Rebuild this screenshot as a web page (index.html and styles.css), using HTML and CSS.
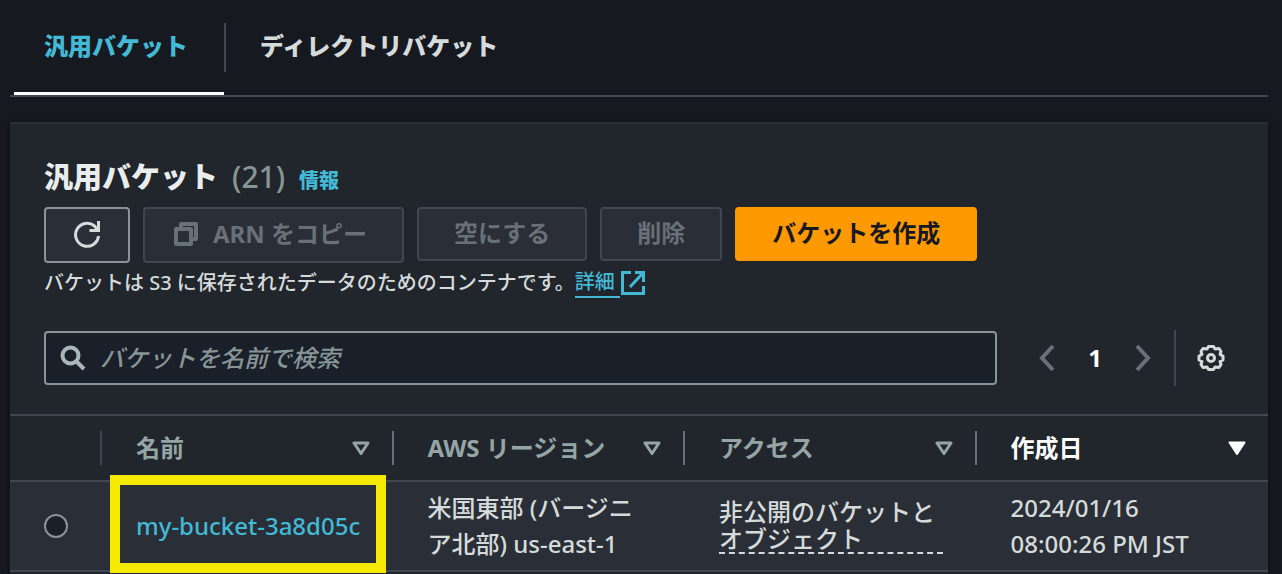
FILE: index.html
```html
<!DOCTYPE html>
<html lang="ja">
<head>
    <meta charset="UTF-8">
    <meta name="viewport" content="width=device-width, initial-scale=1.0">
    <title>S3 バケット</title>
    <link rel="stylesheet" href="styles.css">
</head>
<body>
    <div class="tabs" role="tablist">
        <button class="tab active" role="tab" aria-selected="true">汎用バケット</button>
        <button class="tab" role="tab" aria-selected="false">ディレクトリバケット</button>
    </div>

    <main class="card">
        <div class="card-header">
            <div class="title">
                <h2>汎用バケット</h2>
                <span class="count">(21)</span>
                <a href="#" class="info">情報</a>
            </div>

            <div class="actions">
                <button class="btn btn-icon" aria-label="更新">
                    <svg width="30" height="30" viewBox="0 0 30 30" fill="none" stroke="currentColor" stroke-width="3">
                        <path d="M26.5 16A11.5 11.5 0 1 1 22.5 6L26 10M26.5 1v9.5H17.500"/>
                    </svg>
                </button>
                <button class="btn btn-copy" disabled>
                    <svg width="26" height="26" viewBox="0 0 26 26" fill="none" stroke="currentColor" stroke-width="4" stroke-linejoin="round">
                        <path d="M3 8h15v15H3zM8 7.5V3h15v15h-4"/>
                    </svg>
                    ARN をコピー
                </button>
                <button class="btn" disabled>空にする</button>
                <button class="btn" disabled>削除</button>
                <button class="btn btn-primary">バケットを作成</button>
            </div>

            <p class="description">バケットは S3 に保存されたデータのためのコンテナです。<a href="#" class="external"><span>詳細</span><svg width="26" height="26" viewBox="0 0 26 26" fill="none" stroke="currentColor" stroke-width="3">
                <path d="M11 2.5H2.5v21h21V16M15 2.5h8.5V12M23 3L10 17"/>
            </svg></a></p>

            <div class="toolbar">
                <div class="search">
                    <svg width="26" height="26" viewBox="0 0 26 26" fill="none" stroke="currentColor" stroke-width="4">
                        <circle cx="10.5" cy="10.5" r="8"/>
                        <path d="M16 16l8 8"/>
                    </svg>
                    <input type="text" placeholder="バケットを名前で検索" aria-label="バケットを名前で検索">
                </div>
                <div class="pagination">
                    <button class="page-arrow" aria-label="前のページ" disabled>
                        <svg width="16" height="28" viewBox="0 0 16 28" fill="none" stroke="currentColor" stroke-width="4">
                            <path d="M14 2L3 14l11 12"/>
                        </svg>
                    </button>
                    <button class="page-number">1</button>
                    <button class="page-arrow" aria-label="次のページ" disabled>
                        <svg width="16" height="28" viewBox="0 0 16 28" fill="none" stroke="currentColor" stroke-width="4">
                            <path d="M2 2l11 12L2 26"/>
                        </svg>
                    </button>
                </div>
                <button class="settings" aria-label="設定">
                    <svg width="28" height="28" viewBox="0 0 28 28" fill="none" stroke="currentColor" stroke-width="3" stroke-linejoin="round">
                        <path d="M11.500 2.500h5L18 5L22 4.500L24 7.500L23 10.500L26 12v4L23 17.500L24 20.500L22 23.500L18 23L16.500 25.500h-5L10 23L6 23.500L4 20.500L5 17.500L2 16v-4L5 10.500L4 7.500L6 4.500L10 5z"/>
                        <circle cx="14" cy="14" r="3.500"/>
                    </svg>
                </button>
            </div>
        </div>

        <table class="buckets">
            <colgroup>
                <col class="col-select">
                <col>
                <col>
                <col>
                <col>
            </colgroup>
            <thead>
                <tr>
                    <th aria-label="選択"></th>
                    <th>
                        <button class="sort">名前
                            <svg width="18" height="14" viewBox="0 0 18 14" fill="none" stroke="currentColor" stroke-width="3" stroke-linejoin="round"><path d="M2 2h14L9 12.500z"/></svg>
                        </button>
                    </th>
                    <th>
                        <button class="sort">AWS リージョン
                            <svg width="18" height="14" viewBox="0 0 18 14" fill="none" stroke="currentColor" stroke-width="3" stroke-linejoin="round"><path d="M2 2h14L9 12.500z"/></svg>
                        </button>
                    </th>
                    <th>
                        <button class="sort">アクセス
                            <svg width="18" height="14" viewBox="0 0 18 14" fill="none" stroke="currentColor" stroke-width="3" stroke-linejoin="round"><path d="M2 2h14L9 12.500z"/></svg>
                        </button>
                    </th>
                    <th aria-sort="descending">
                        <button class="sort sorted">作成日
                            <svg width="18" height="14" viewBox="0 0 18 14" fill="currentColor" stroke="currentColor" stroke-width="2" stroke-linejoin="round"><path d="M1.500 1.500h15L9 13z"/></svg>
                        </button>
                    </th>
                </tr>
            </thead>
            <tbody>
                <tr>
                    <td class="select"><input type="radio" name="bucket" aria-label="my-bucket-3a8d05c"></td>
                    <td class="highlight"><a href="#">my-bucket-3a8d05c</a></td>
                    <td>米国東部 (バージニア北部) us-east-1</td>
                    <td><button class="access">非公開のバケットとオブジェクト</button></td>
                    <td>2024/01/16 08:00:26 PM JST</td>
                </tr>
            </tbody>
        </table>
    </main>
</body>
</html>
```
FILE: styles.css
```css
* {
    box-sizing: border-box;
}
body {
    display: flex;
    flex-direction: column;
    min-height: 100vh;
    margin: 0;
    padding: 0 14px 0 10px;
    background: #16191f;
    color: #d5dbdb;
    font-family: "Noto Sans", "Noto Sans CJK JP", sans-serif;
    font-size: 24px;
    font-weight: 500;
    line-height: 36px;
}
button, input {
    margin: 0;
    padding: 0;
    border: none;
    background: none;
    color: inherit;
    font: inherit;
}
button {
    cursor: pointer;
}
button:disabled {
    cursor: default;
}
svg {
    display: block;
    flex: none;
}
a {
    color: #44b9d6;
    text-decoration: none;
}

/* tabs */
.tabs {
    display: flex;
    padding: 22px 4px 0;
    border-bottom: 2px solid #414750;
}
.tab {
    padding: 6px 36px 28px;
    border-bottom: 3px solid transparent;
    font-weight: 900;
}
.tab.active {
    padding-left: 30px;
    border-bottom-color: #fff;
    color: #44b9d6;
}
.tab + .tab {
    position: relative;
}
.tab + .tab::before {
    content: "";
    position: absolute;
    top: 1px;
    left: 0;
    width: 2px;
    height: 49px;
    background: #414750;
}

/* card */
.card {
    flex: 1;
    margin-top: 25px;
    border-top: 2px solid #2a2e36;
    background: #21252c;
    box-shadow: 0 1px 6px rgba(0, 0, 0, 0.6);
}
.card-header {
    padding: 33px 34px 28px;
}
.title {
    display: flex;
    align-items: baseline;
    gap: 14px;
    line-height: 40px;
}
h2 {
    margin: 0;
    color: #eaeded;
    font-size: 29px;
    font-weight: 900;
}
.count {
    color: #879596;
    font-size: 30px;
}
.info {
    font-size: 20px;
    font-weight: 900;
}
.actions {
    display: flex;
    align-items: flex-start;
    gap: 13px;
    margin-top: 6px;
}
.btn {
    height: 54px;
    padding: 0 35px 2px;
    border: 2px solid #414750;
    border-radius: 4px;
    background: #2a2e36;
    font-weight: bold;
}
.btn:disabled {
    color: #687078;
}
.btn-icon {
    height: 56px;
    padding: 0 26px;
    border-color: #879596;
}
.btn-copy {
    display: flex;
    align-items: center;
    gap: 14px;
    height: 56px;
    padding-left: 28px;
}
.btn-primary {
    border-color: #ff9900;
    background: #ff9900;
    color: #16191f;
}
.description {
    display: flex;
    align-items: center;
    margin: 0;
    padding: 4px 0;
    font-size: 20px;
    line-height: 32px;
}
.external {
    display: flex;
    align-items: center;
}
.external span {
    padding-right: 5px;
    border-bottom: 2px solid #44b9d6;
    line-height: 28px;
}

/* search and paging */
.toolbar {
    display: flex;
    align-items: center;
    margin-top: 27px;
}
.search {
    display: flex;
    flex: 1;
    align-items: center;
    gap: 14px;
    height: 54px;
    padding: 0 14px;
    border: 2px solid #879596;
    border-radius: 4px;
    background: #1a2029;
    color: #aab7b8;
}
.search input {
    flex: 1;
    min-width: 0;
    outline: none;
}
.search input::placeholder {
    color: #879596;
    font-style: italic;
    opacity: 1;
}
.pagination {
    display: flex;
    align-items: center;
    gap: 33px;
    padding: 0 23px 0 42px;
}
.page-arrow {
    color: #687078;
}
.page-number {
    color: #fff;
    font-weight: bold;
}
.settings {
    display: flex;
    align-items: center;
    height: 56px;
    padding: 0 9px 0 21px;
    border-left: 2px solid #414750;
}

/* table */
.buckets {
    width: 100%;
    border-top: 2px solid #414750;
    border-spacing: 0;
    table-layout: fixed;
}
.col-select {
    width: 92px;
}
th {
    padding: 15px 0;
    border-bottom: 2px solid #414750;
}
.sort {
    display: flex;
    align-items: center;
    justify-content: space-between;
    width: 100%;
    height: 34px;
    padding: 0 22px 0 34px;
    border-right: 2px solid #687078;
    color: #95a5a6;
    font-weight: bold;
}
th:first-child::after {
    content: "";
    display: block;
    height: 34px;
    border-right: 2px solid #414750;
}
.sort.sorted {
    padding-right: 20px;
    border-right-color: transparent;
    color: #fff;
}
td {
    padding: 8px 34px;
    border-bottom: 2px solid #414750;
    background: #2a2e36;
}
.select input {
    display: block;
    width: 24px;
    height: 24px;
    border: 2px solid #879596;
    border-radius: 50%;
    background: #1a2029;
    appearance: none;
}
.highlight {
    position: relative;
    white-space: nowrap;
}
.highlight::after {
    content: "";
    position: absolute;
    top: -7px;
    right: 8px;
    bottom: -3px;
    left: 8px;
    border: 10px solid #f5ea00;
    pointer-events: none;
}
.access {
    display: block;
    width: 100%;
    border-bottom: 2px dashed #d5dbdb;
    line-height: 27px;
    text-align: left;
}
```
